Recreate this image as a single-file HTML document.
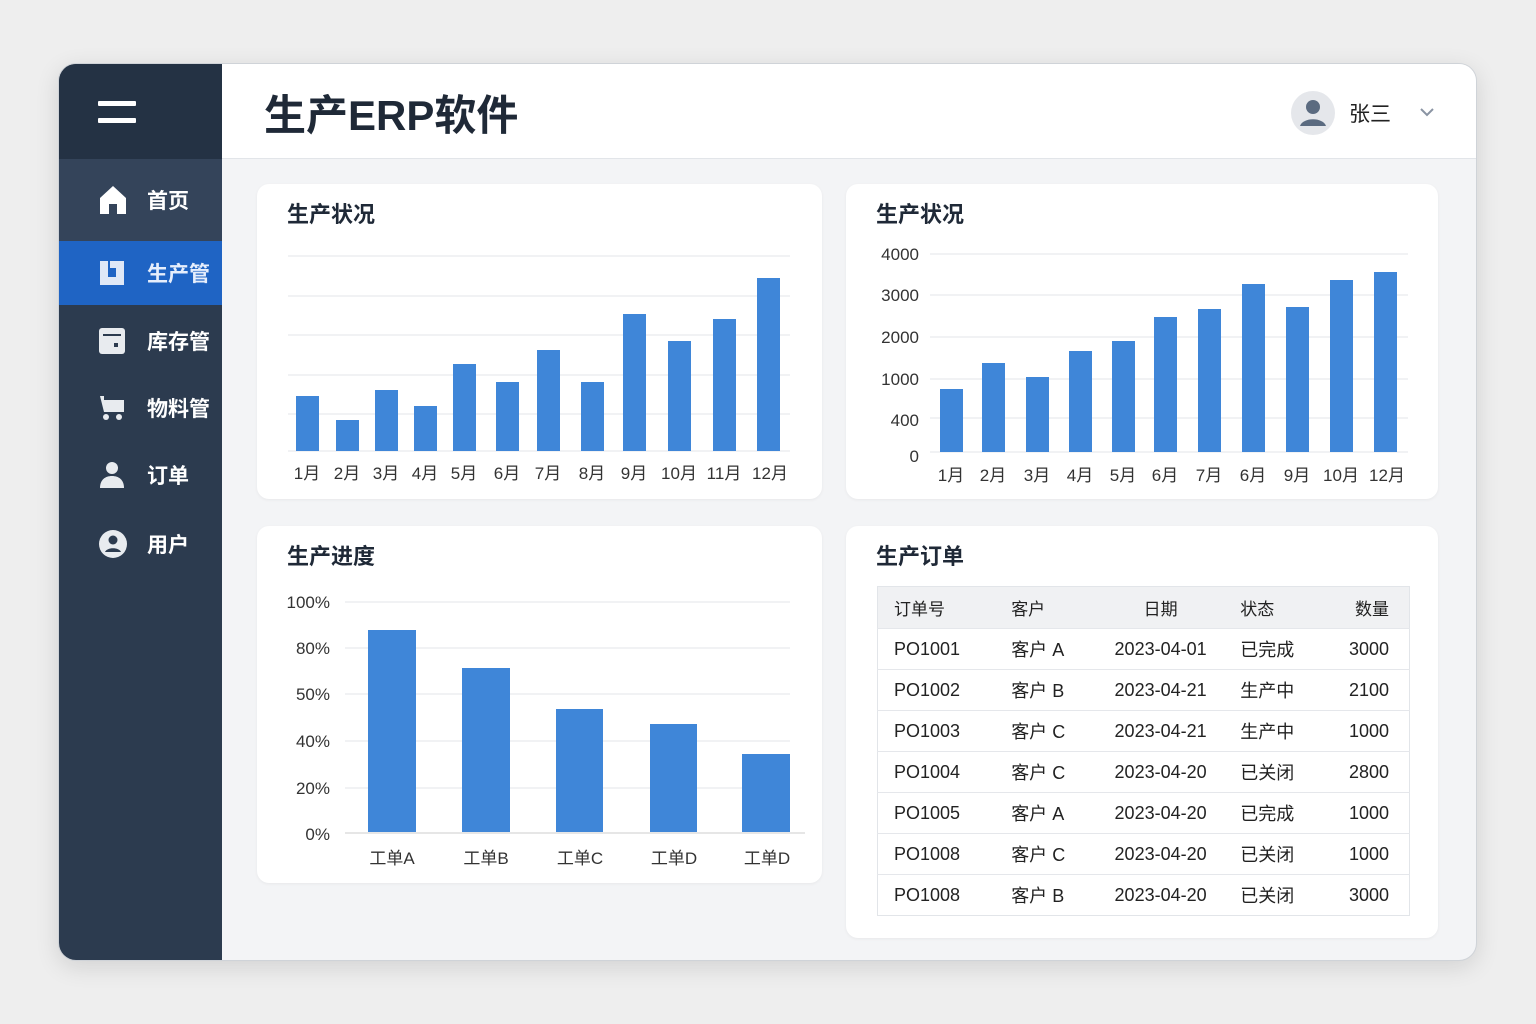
<!DOCTYPE html>
<html><head><meta charset="utf-8"><style>
*{margin:0;padding:0;box-sizing:border-box}
body{width:1536px;height:1024px;background:#eeeeee;font-family:"Liberation Sans","Noto Sans CJK SC",sans-serif;position:relative;overflow:hidden;color:#1f2937}
.app{position:absolute;left:58px;top:63px;width:1419px;height:898px;border-radius:18px;overflow:hidden;background:#f3f4f6;box-shadow:0 6px 24px rgba(0,0,0,.12);border:1px solid #cfd3d8}
.side{position:absolute;left:0;top:0;width:163px;height:100%;background:#2c3b4f}
.stop{position:absolute;left:0;top:0;width:163px;height:95px;background:#243244}
.ham{position:absolute;left:39px;width:38px;height:5px;background:#fff;border-radius:1px}
.item{position:absolute;left:0;width:163px;height:64px;color:#fff;font-size:21px;font-weight:bold}
.item span{position:absolute;left:88px;top:50%;transform:translateY(-50%)}
.item svg{position:absolute;left:40px;top:50%;transform:translateY(-50%)}
.active{background:#1f64c4;color:#e6eefc}
.head{position:absolute;left:163px;top:0;right:0;height:95px;background:#fff;border-bottom:1px solid #e2e5e9}
.title{position:absolute;left:42px;top:18px;font-size:42px;font-weight:bold;color:#1f2937}
.card{position:absolute;background:#fff;border-radius:12px;box-shadow:0 1px 3px rgba(0,0,0,.05)}
.ct{position:absolute;left:30px;top:13px;font-size:22px;font-weight:bold;color:#1f2937}
table{border-collapse:collapse;position:absolute;left:877px;top:586px;width:533px;font-size:18px;color:#222;border:1px solid #e2e5e9}
td,th{height:41px;border-bottom:1px solid #e5e7eb}
th{background:#f0f1f3;font-weight:normal;font-size:17px;height:42px}
</style></head><body>
<div class="app">
 <div class="side">
  <div class="stop"><div class="ham" style="top:37px"></div><div class="ham" style="top:54px"></div></div>
  <div class="item" style="top:95px;background:#34445a;height:82px"><svg width="28" height="30" viewBox="0 0 28 30"><path d="M14 1 L27 13 V29 H18 V19 H10 V29 H1 V13Z" fill="#fff"/></svg><span>首页</span></div>
  <div class="item active" style="top:177px"><svg width="26" height="26" viewBox="0 0 26 26"><path d="M1 1h8v16h8V8h-6V1h14v24H1z" fill="#dfe8f7"/></svg><span>生产管</span></div>
  <div class="item" style="top:245px"><svg width="26" height="26" viewBox="0 0 26 26"><rect x="0" y="0" width="26" height="26" rx="3" fill="#e8ebef"/><rect x="4" y="6" width="18" height="2" fill="#2c3b4f"/><rect x="15" y="15" width="4" height="4" fill="#2c3b4f"/></svg><span>库存管</span></div>
  <div class="item" style="top:312px"><svg width="26" height="26" viewBox="0 0 26 26"><path d="M1 1h4v4h20v12H5z" fill="#e8ebef"/><circle cx="7" cy="22" r="3" fill="#e8ebef"/><circle cx="20" cy="22" r="3" fill="#e8ebef"/></svg><span>物料管</span></div>
  <div class="item" style="top:379px"><svg width="26" height="28" viewBox="0 0 26 28"><circle cx="13" cy="7" r="6" fill="#e8ebef"/><path d="M1 27c0-8 5-12 12-12s12 4 12 12z" fill="#e8ebef"/></svg><span>订单</span></div>
  <div class="item" style="top:448px"><svg width="28" height="28" viewBox="0 0 28 28"><circle cx="14" cy="14" r="14" fill="#e8ebef"/><circle cx="14" cy="10" r="4.5" fill="#2c3b4f"/><path d="M6 22c2-5 14-5 16 0z" fill="#2c3b4f"/></svg><span>用户</span></div>
 </div>
 <div class="head"><div class="title">生产ERP软件</div>
  <svg style="position:absolute;left:1068px;top:26px" width="46" height="46" viewBox="0 0 46 46"><circle cx="23" cy="23" r="22" fill="#e5e7eb"/><circle cx="23" cy="17" r="7" fill="#5b6b80"/><path d="M10 36c3-9 23-9 26 0z" fill="#5b6b80"/></svg>
  <div style="position:absolute;left:1127px;top:34px;font-size:21px;color:#222">张三</div>
  <svg style="position:absolute;left:1197px;top:43px" width="16" height="10" viewBox="0 0 16 10"><path d="M2 2l6 6 6-6" stroke="#8a94a3" stroke-width="2" fill="none"/></svg>
 </div>
</div>

<div class="card" style="left:257px;top:184px;width:565px;height:315px"><div class="ct">生产状况</div></div>
<div class="card" style="left:846px;top:184px;width:592px;height:315px"><div class="ct">生产状况</div></div>
<div class="card" style="left:257px;top:526px;width:565px;height:357px"><div class="ct">生产进度</div></div>
<div class="card" style="left:846px;top:526px;width:592px;height:412px"><div class="ct">生产订单</div></div>

<svg style="position:absolute;left:0;top:0" width="1536" height="1024">
 <g stroke="#e3e5e8" stroke-width="1">
  <line x1="288" x2="790" y1="256" y2="256"/><line x1="288" x2="790" y1="296" y2="296"/><line x1="288" x2="790" y1="335" y2="335"/><line x1="288" x2="790" y1="375" y2="375"/><line x1="288" x2="790" y1="414" y2="414"/><line x1="288" x2="790" y1="451" y2="451"/>
  <line x1="930" x2="1408" y1="254" y2="254"/><line x1="930" x2="1408" y1="295" y2="295"/><line x1="930" x2="1408" y1="337" y2="337"/><line x1="930" x2="1408" y1="379" y2="379"/><line x1="930" x2="1408" y1="418" y2="418"/><line x1="930" x2="1408" y1="452" y2="452"/>
  <line x1="345" x2="790" y1="602" y2="602"/><line x1="345" x2="790" y1="648" y2="648"/><line x1="345" x2="790" y1="694" y2="694"/><line x1="345" x2="790" y1="741" y2="741"/><line x1="345" x2="790" y1="788" y2="788"/><line x1="345" x2="805" y1="833" y2="833" stroke="#ccc"/>
 </g>
 <g fill="#3f86d8">
  <rect x="296" y="396" width="23" height="55"/><rect x="336" y="420" width="23" height="31"/><rect x="375" y="390" width="23" height="61"/><rect x="414" y="406" width="23" height="45"/><rect x="453" y="364" width="23" height="87"/><rect x="496" y="382" width="23" height="69"/><rect x="537" y="350" width="23" height="101"/><rect x="581" y="382" width="23" height="69"/><rect x="623" y="314" width="23" height="137"/><rect x="668" y="341" width="23" height="110"/><rect x="713" y="319" width="23" height="132"/><rect x="757" y="278" width="23" height="173"/>
  <rect x="940" y="389" width="23" height="63"/><rect x="982" y="363" width="23" height="89"/><rect x="1026" y="377" width="23" height="75"/><rect x="1069" y="351" width="23" height="101"/><rect x="1112" y="341" width="23" height="111"/><rect x="1154" y="317" width="23" height="135"/><rect x="1198" y="309" width="23" height="143"/><rect x="1242" y="284" width="23" height="168"/><rect x="1286" y="307" width="23" height="145"/><rect x="1330" y="280" width="23" height="172"/><rect x="1374" y="272" width="23" height="180"/>
  <rect x="368" y="630" width="48" height="202"/><rect x="462" y="668" width="48" height="164"/><rect x="556" y="709" width="47" height="123"/><rect x="650" y="724" width="47" height="108"/><rect x="742" y="754" width="48" height="78"/>
 </g>
 <g font-family="Liberation Sans, Noto Sans CJK SC, sans-serif" font-size="17" fill="#333" text-anchor="middle">
  <text x="307" y="479">1月</text><text x="347" y="479">2月</text><text x="386" y="479">3月</text><text x="425" y="479">4月</text><text x="464" y="479">5月</text><text x="507" y="479">6月</text><text x="548" y="479">7月</text><text x="592" y="479">8月</text><text x="634" y="479">9月</text><text x="679" y="479">10月</text><text x="724" y="479">11月</text><text x="770" y="479">12月</text>
  <text x="951" y="481">1月</text><text x="993" y="481">2月</text><text x="1037" y="481">3月</text><text x="1080" y="481">4月</text><text x="1123" y="481">5月</text><text x="1165" y="481">6月</text><text x="1209" y="481">7月</text><text x="1253" y="481">6月</text><text x="1297" y="481">9月</text><text x="1341" y="481">10月</text><text x="1387" y="481">12月</text>
  <text x="392" y="864">工单A</text><text x="486" y="864">工单B</text><text x="580" y="864">工单C</text><text x="674" y="864">工单D</text><text x="767" y="864">工单D</text>
 </g>
 <g font-family="Liberation Sans, sans-serif" font-size="17" fill="#333" text-anchor="end">
  <text x="919" y="260">4000</text><text x="919" y="301">3000</text><text x="919" y="343">2000</text><text x="919" y="385">1000</text><text x="919" y="426">400</text><text x="919" y="462">0</text>
  <text x="330" y="608">100%</text><text x="330" y="654">80%</text><text x="330" y="700">50%</text><text x="330" y="747">40%</text><text x="330" y="794">20%</text><text x="330" y="840">0%</text>
 </g>
</svg>

<table>
<tr><th style="text-align:left;padding-left:16px">订单号</th><th style="text-align:left;padding-left:16px">客户</th><th>日期</th><th style="text-align:left;padding-left:14px">状态</th><th style="text-align:right;padding-right:20px">数量</th></tr>
<tr><td style="padding-left:16px">PO1001</td><td style="padding-left:16px">客户 A</td><td style="text-align:center">2023-04-01</td><td style="padding-left:14px">已完成</td><td style="text-align:right;padding-right:20px">3000</td></tr>
<tr><td style="padding-left:16px">PO1002</td><td style="padding-left:16px">客户 B</td><td style="text-align:center">2023-04-21</td><td style="padding-left:14px">生产中</td><td style="text-align:right;padding-right:20px">2100</td></tr>
<tr><td style="padding-left:16px">PO1003</td><td style="padding-left:16px">客户 C</td><td style="text-align:center">2023-04-21</td><td style="padding-left:14px">生产中</td><td style="text-align:right;padding-right:20px">1000</td></tr>
<tr><td style="padding-left:16px">PO1004</td><td style="padding-left:16px">客户 C</td><td style="text-align:center">2023-04-20</td><td style="padding-left:14px">已关闭</td><td style="text-align:right;padding-right:20px">2800</td></tr>
<tr><td style="padding-left:16px">PO1005</td><td style="padding-left:16px">客户 A</td><td style="text-align:center">2023-04-20</td><td style="padding-left:14px">已完成</td><td style="text-align:right;padding-right:20px">1000</td></tr>
<tr><td style="padding-left:16px">PO1008</td><td style="padding-left:16px">客户 C</td><td style="text-align:center">2023-04-20</td><td style="padding-left:14px">已关闭</td><td style="text-align:right;padding-right:20px">1000</td></tr>
<tr><td style="padding-left:16px;border:none">PO1008</td><td style="padding-left:16px;border:none">客户 B</td><td style="text-align:center;border:none">2023-04-20</td><td style="padding-left:14px;border:none">已关闭</td><td style="text-align:right;padding-right:20px;border:none">3000</td></tr>
</table>
</body></html>
